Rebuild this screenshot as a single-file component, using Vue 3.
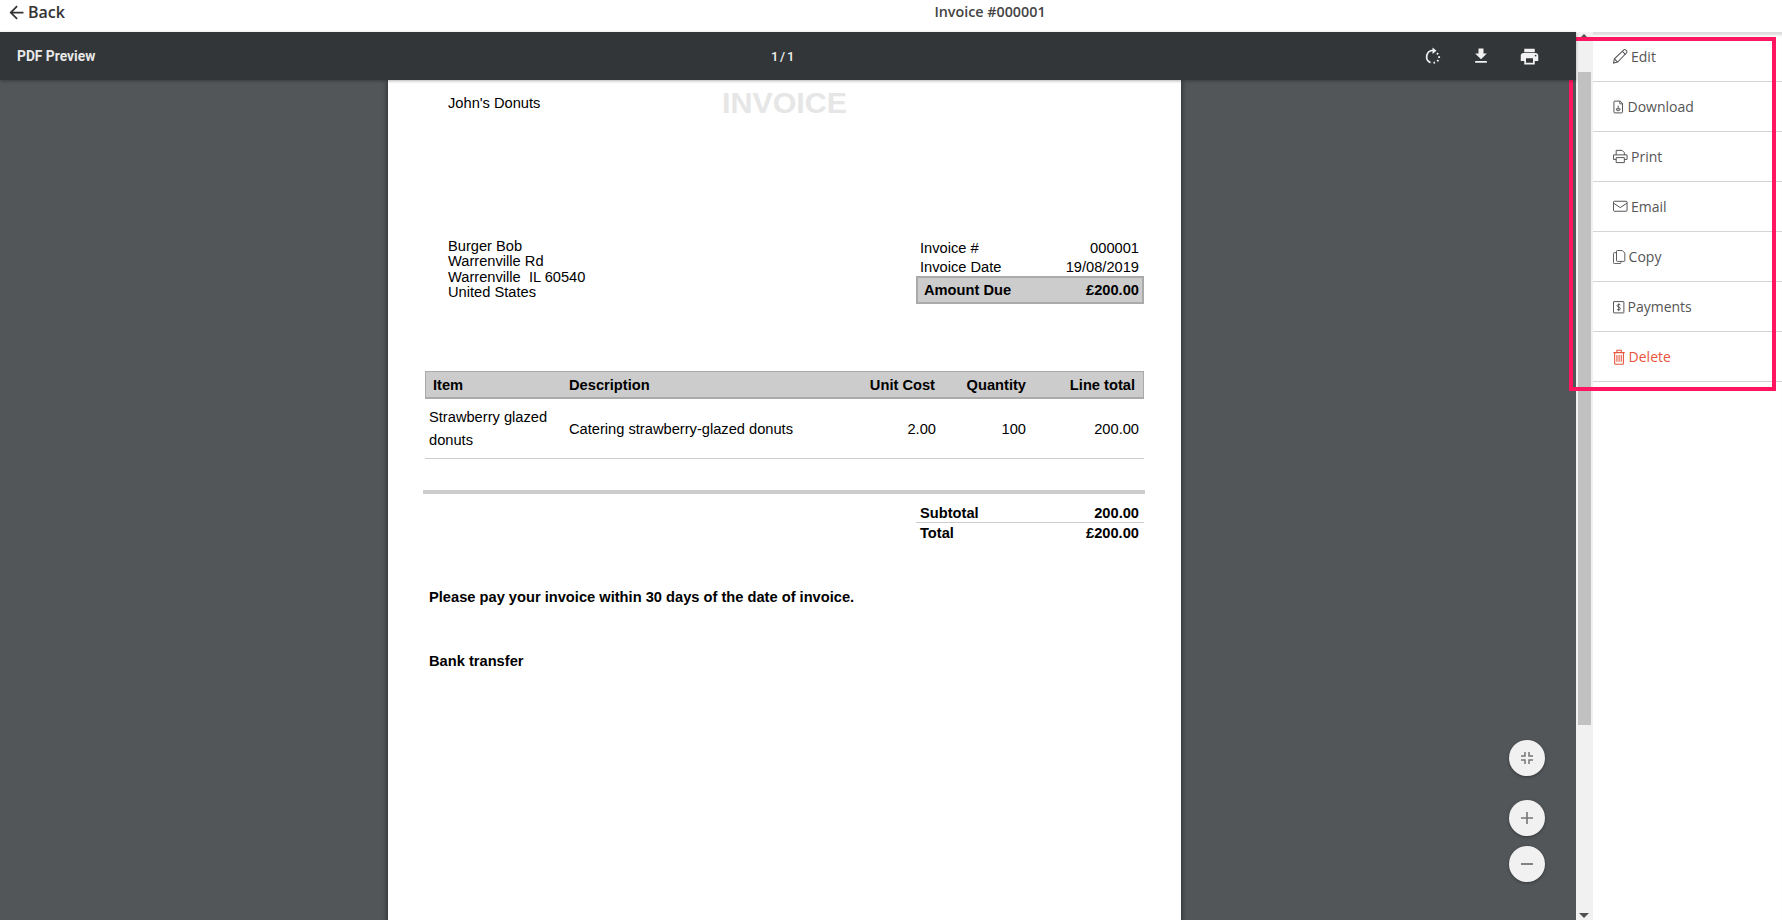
<template>
  <div class="app-shell">
    <header class="top-bar">
      <a class="back-link">
        <svg width="21" height="21" viewBox="0 0 24 24"><path d="M20 11H7.83l5.59-5.59L12 4l-8 8 8 8 1.41-1.41L7.83 13H20z" fill="#333"/></svg>
        <span>Back</span>
      </a>
      <div class="doc-title">Invoice #000001</div>
    </header>

    <div class="work-area">
      <section class="viewer">
        <div class="viewer-bar">
          <span class="viewer-name">PDF Preview</span>
          <span class="viewer-count">1 / 1</span>
          <div class="viewer-tools">
            <svg width="20" height="20" viewBox="0 0 20 20" fill="none" stroke="#f1f1f1" stroke-width="1.7">
              <path d="M10 4.500A6.300 6.300 0 0 0 7.500 16.600"/>
              <path d="M9.500 1.500l4 3.200-4 3.200z" fill="#f1f1f1" stroke="none"/>
              <path d="M14 7.200l1 1.200M16.100 10.300v1.600M15.300 14l-1 1.300M12 16.500l-1.500.4" stroke-width="1.900"/>
            </svg>
            <svg width="20" height="20" viewBox="0 0 24 24" fill="#f1f1f1"><path d="M19 9h-4V3H9v6H5l7 7 7-7zM5 18v2h14v-2H5z"/></svg>
            <svg width="21" height="21" viewBox="0 0 24 24" fill="#f1f1f1"><path d="M19 8H5c-1.660 0-3 1.340-3 3v6h4v4h12v-4h4v-6c0-1.660-1.340-3-3-3zm-3 11H8v-5h8v5zm3-7c-.55 0-1-.45-1-1s.45-1 1-1 1 .45 1 1-.45 1-1 1zm-1-9H6v4h12V3z"/></svg>
          </div>
        </div>

        <div class="viewer-stage">
          <article class="sheet">
            <div class="sheet-head">
              <div class="company">John's Donuts</div>
              <div class="invoice-word">INVOICE</div>
            </div>

            <div class="bill-row">
              <div class="address">
                <div>Burger Bob</div>
                <div>Warrenville Rd</div>
                <div>Warrenville&nbsp; IL 60540</div>
                <div>United States</div>
              </div>
              <div class="meta">
                <div class="meta-line"><span>Invoice #</span><span>000001</span></div>
                <div class="meta-line"><span>Invoice Date</span><span>19/08/2019</span></div>
                <div class="meta-due"><span>Amount Due</span><span>£200.00</span></div>
              </div>
            </div>

            <div class="items">
              <div class="items-head">
                <span v-for="h in headers" :key="h">{{ h }}</span>
              </div>
              <div class="items-row">
                <span class="item-name">Strawberry glazed donuts</span>
                <span>Catering strawberry-glazed donuts</span>
                <span>2.00</span>
                <span>100</span>
                <span>200.00</span>
              </div>
            </div>

            <div class="thick-rule"></div>

            <div class="totals">
              <div class="total-line sub"><span>Subtotal</span><span>200.00</span></div>
              <div class="total-line"><span>Total</span><span>£200.00</span></div>
            </div>

            <p class="terms">Please pay your invoice within 30 days of the date of invoice.</p>
            <p class="bank">Bank transfer</p>
          </article>

          <div class="fabs">
            <button class="fab fit">
              <svg width="18" height="18" viewBox="0 0 18 18" fill="none" stroke="#757575" stroke-width="1.5"><path d="M7 3v4H3M11 3v4h4M7 15v-4H3M11 15v-4h4"/></svg>
            </button>
            <button class="fab zoom-in">
              <svg width="18" height="18" viewBox="0 0 18 18" fill="none" stroke="#757575" stroke-width="1.6"><path d="M9 3v12M3 9h12"/></svg>
            </button>
            <button class="fab">
              <svg width="18" height="18" viewBox="0 0 18 18" fill="none" stroke="#757575" stroke-width="1.8"><path d="M3 9h12"/></svg>
            </button>
          </div>
        </div>
      </section>

      <div class="scroll-track">
        <i class="arrow up"></i>
        <div class="scroll-thumb"></div>
        <i class="arrow down"></i>
      </div>

      <aside class="actions">
        <a v-for="a in actions" :key="a.label" class="action" :class="{ danger: a.danger }">
          <span class="action-icon" :style="{ width: a.w + 'px' }">
            <svg :width="a.s" :height="a.s" viewBox="0 0 16 16" fill="none" stroke="currentColor" stroke-width="1.1" v-html="a.icon"></svg>
          </span>
          <span>{{ a.label }}</span>
        </a>
      </aside>

      <div class="highlight"></div>
    </div>
  </div>
</template>

<script setup>
const headers = ['Item', 'Description', 'Unit Cost', 'Quantity', 'Line total']

const actions = [
  { label: 'Edit', w: 18, s: 15, icon: '<path d="M.5 15l1-4.500L11.500 1a1.400 1.400 0 0 1 2 0l1 1a1.400 1.400 0 0 1 0 2L5 14z"/><path d="M1.500 10.500L5 14M10 2.500l3.500 3.500"/>' },
  { label: 'Download', w: 14.5, s: 16, icon: '<path d="M1 2.500a1 1 0 0 1 1-1h6l2.500 2.500v9.500a1 1 0 0 1-1 1H2a1 1 0 0 1-1-1z"/><path d="M7.500 1.500V4.500h3M5.700 6.500v4M3.500 10h4.400a2.200 2.200 0 0 1-4.400 0z"/>' },
  { label: 'Print', w: 18, s: 14.5, icon: '<path d="M3.500 6.500V1.500h6.500l2.500 2.500v2.500M3.500 11.500h-3v-5h15v5h-3"/><path d="M3.500 9.500h9v5.500h-9z"/>' },
  { label: 'Email', w: 18, s: 14.5, icon: '<rect x=".500" y="2.500" width="15" height="11" rx="1"/><path d="M.500 4.500l7.500 5 7.500-5"/>' },
  { label: 'Copy', w: 15.6, s: 14, icon: '<path d="M4 3H1.500a1 1 0 0 0-1 1v10.500a1 1 0 0 0 1 1H8a1 1 0 0 0 1-1V13"/><path d="M4 1.500a1 1 0 0 1 1-1h5.500L13.500 3.500V12a1 1 0 0 1-1 1H5a1 1 0 0 1-1-1z"/>' },
  { label: 'Payments', w: 14.5, s: 16, icon: '<rect x=".500" y="2" width="11.500" height="12.500" rx=".5"/><path d="M8.200 5.700C7.700 5 4.500 4.800 4.500 6.600 4.500 8.400 8.200 7.700 8.200 9.900 8.200 11.500 5 11.500 4.500 10.500M6.300 4v8.500"/>' },
  { label: 'Delete', w: 15.6, s: 16, danger: true, icon: '<path d="M.5 3.500h11.500M4 3.500V1h4.500v2.500M1.700 3.500v11a1 1 0 0 0 1 1h7a1 1 0 0 0 1-1v-11M4 6v7M6.250 6v7M8.500 6v7"/>' },
]
</script>

<style scoped>
* { box-sizing: border-box; }

.app-shell {
  height: 920px;
  overflow: hidden;
  display: flex;
  flex-direction: column;
  background: #fff;
  font-family: "Open Sans", sans-serif;
}

.top-bar {
  position: relative;
  height: 32px;
  flex-shrink: 0;
  display: flex;
  align-items: center;
  justify-content: center;
  padding-bottom: 10px;
}
.back-link {
  position: absolute;
  left: 6px;
  top: 1px;
  display: flex;
  align-items: center;
  gap: 1px;
  font-size: 16px;
  font-weight: 600;
  color: #333;
}
.doc-title { margin-left: 198px; font-size: 14.3px; font-weight: 600; color: #444; }

.work-area { position: relative; flex: 1; min-height: 0; display: flex; }

.viewer { width: 1576px; display: flex; flex-direction: column; background: #525659; }
.viewer-bar {
  height: 48px;
  flex-shrink: 0;
  padding: 0 36px 0 17px;
  display: flex;
  align-items: center;
  background: #323639;
  color: #f1f1f1;
  box-shadow: 0 1px 3px rgba(0, 0, 0, .3);
  position: relative;
  z-index: 2;
}
.viewer-name { width: 754px; font-family: Roboto, sans-serif; font-size: 13.8px; font-weight: 700; color: #e8e8e8; }
.viewer-count { font-family: Roboto, sans-serif; font-size: 13px; font-weight: 500; word-spacing: -1.5px; }
.viewer-tools { margin-left: auto; display: flex; align-items: center; gap: 28px; }

.viewer-stage { position: relative; flex: 1; min-height: 0; overflow: hidden; }

.sheet {
  width: 793px;
  height: 900px;
  margin-left: 388px;
  padding: 15px 37px 0 37px;
  background: #fff;
  color: #000;
  box-shadow: 0 0 6px rgba(0, 0, 0, .6);
  font-family: "Liberation Sans", Arial, sans-serif;
  font-size: 14.67px;
}

.sheet-head { height: 144px; padding-left: 23px; display: flex; }
.company { width: 274px; line-height: 17px; }
.invoice-word { font-size: 30.4px; font-weight: 700; line-height: 30px; color: #e6e6e6; margin-top: -8px; }

.bill-row { display: flex; justify-content: space-between; padding-left: 23px; height: 132px; }
.address { line-height: 15.4px; }
.meta { width: 228px; }
.meta-line { display: flex; justify-content: space-between; height: 19px; line-height: 19px; padding: 0 5px 0 4px; }
.meta-due {
  display: flex;
  justify-content: space-between;
  height: 28px;
  line-height: 24px;
  margin-top: -1px;
  padding: 0 3px 0 6px;
  background: #ccc;
  border: 2px solid #aaa;
  font-weight: 700;
}

.items-head, .items-row { display: grid; align-items: center; }
.items-head {
  grid-template-columns: 136px 1fr 110px 91px 109px;
  height: 28px;
  padding: 0 8px 0 7px;
  background: #ccc;
  border: 2px solid #aaa;
  border-width: 1px 1px 2px;
  font-weight: 700;
}
.items-head span:nth-child(n + 3), .items-row span:nth-child(n + 3) { text-align: right; }
.items-row {
  grid-template-columns: 140px 1fr 110px 90px 113px;
  height: 60px;
  padding: 0 5px 0 4px;
  border-bottom: 1.5px solid #ccc;
}
.item-name { line-height: 23px; width: 130px; }

.thick-rule { margin: 31px -1px 0 -2px; height: 4px; background: #ccc; }

.totals { width: 228px; margin: 9px 0 0 auto; font-weight: 700; }
.total-line { display: flex; justify-content: space-between; height: 20px; line-height: 20px; padding: 0 5px 0 4px; }
.total-line.sub { border-bottom: 1px solid #ccc; }

.terms { margin: 44px 0 0 4px; line-height: 20px; font-weight: 700; }
.bank { margin: 44px 0 0 4px; line-height: 20px; font-weight: 700; }

.fabs { position: absolute; right: 31px; top: 660px; display: flex; flex-direction: column; gap: 10px; }
.fab {
  width: 36px;
  height: 36px;
  padding: 0;
  border: 0;
  border-radius: 50%;
  display: flex;
  align-items: center;
  justify-content: center;
  background: #f1f1f1;
  box-shadow: 0 1px 3px rgba(0, 0, 0, .35);
}
.fab.fit { margin-bottom: 14px; }

.scroll-track {
  width: 17px;
  flex-shrink: 0;
  position: relative;
  background: #f1f1f1;
  display: flex;
  flex-direction: column;
  align-items: center;
}
.scroll-thumb { width: 13px; height: 653px; margin-top: 40px; background: #c1c1c1; }
.arrow { position: absolute; left: 3px; width: 0; height: 0; border: 5px solid transparent; }
.arrow.up { top: -3px; border-bottom-color: #505050; }
.arrow.down { bottom: -3px; border-top-color: #505050; }

.actions { flex: 1; border-top: 2px solid #ddd; box-shadow: inset 0 3px 3px -2px rgba(0, 0, 0, .15); }
.action {
  height: 50px;
  padding-left: 20px;
  display: flex;
  align-items: center;
  border-bottom: 1px solid #d4d4d4;
  font-size: 14px;
  color: #555;
}
.action:first-child { height: 48px; padding-bottom: 2px; }
.action-icon { display: flex; flex-shrink: 0; }
.action.danger { color: #e8543c; }

.highlight {
  position: absolute;
  left: 1569px;
  top: 5px;
  width: 207px;
  height: 354px;
  border: 4px solid #ff1560;
  pointer-events: none;
}
</style>
